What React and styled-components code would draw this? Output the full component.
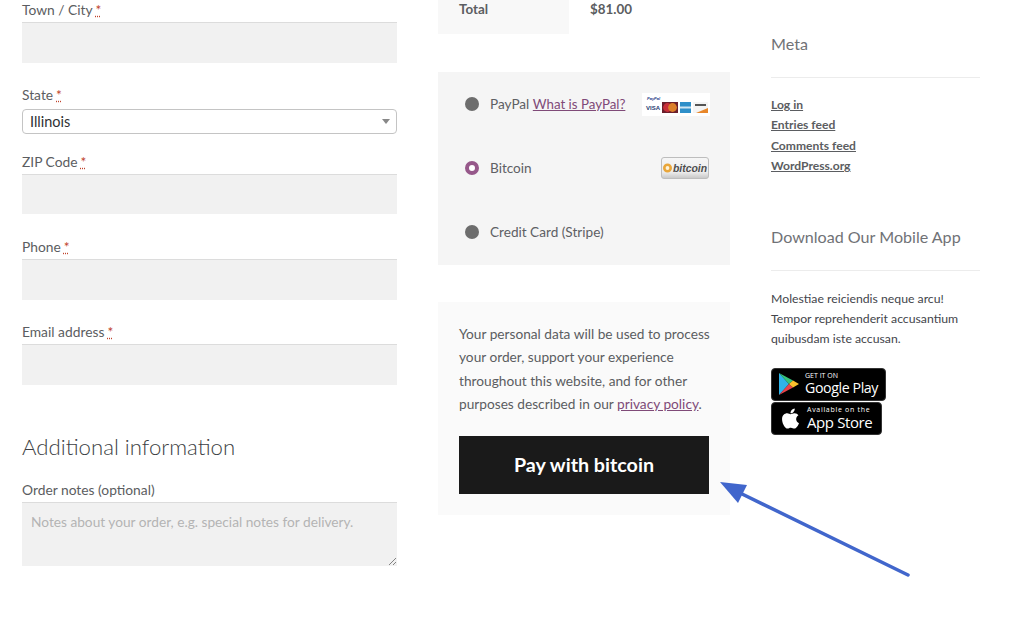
import React from 'react'
import styled, {createGlobalStyle} from 'styled-components'
import {FaApple} from 'react-icons/fa'

const GlobalStyle = createGlobalStyle`
  html, body {
    margin: 0;
    padding: 0;
    background: #fff;
    overflow: hidden;
  }
  body {
    font-family: "Lato", "Open Sans", sans-serif;
    color: #43454b;
  }
`

const Page = styled.div`
  position: relative;
  width: 1016px;
  height: 627px;
  overflow: hidden;
  display: grid;
  grid-template-columns: 375px 292px 209px;
  column-gap: 41px;
  padding-left: 22px;
  box-sizing: border-box;
`

const Column = styled.div`
  display: flex;
  flex-direction: column;
`

const Sidebar = styled(Column)`
  padding-top: 32px;
`

const Field = styled.div`
  display: flex;
  flex-direction: column;
  margin-bottom: ${p => p.$gap}px;
`

const Label = styled.label`
  font-size: 13.8px;
  line-height: 20px;
  color: #5b5d61;
  margin-bottom: 2px;
`

const Required = styled.abbr`
  color: #c0432c;
  margin-left: 3px;
  text-decoration: underline dotted #c0432c;
`

const TextInput = styled.div`
  height: ${p => p.$height}px;
  background: #f1f1f1;
  border-top: 1px solid #dcdcdc;
  box-sizing: border-box;
`

const Select = styled.div`
  height: 25px;
  margin-top: 2px;
  background: #fff;
  border: 1px solid #c4c4c4;
  border-radius: 4px;
  box-sizing: border-box;
  display: flex;
  align-items: center;
  justify-content: space-between;
  padding: 0 6px 0 7px;
  font-size: 14.5px;
  color: #2f3033;
`

const Caret = styled.span`
  width: 0;
  height: 0;
  border-left: 4px solid transparent;
  border-right: 4px solid transparent;
  border-top: 5px solid #888;
`

const SectionTitle = styled.h3`
  margin: 0 0 18px;
  font-size: 22.2px;
  line-height: 30px;
  font-weight: 300;
  color: #3d3f44;
`

const TextArea = styled(TextInput)`
  position: relative;
  padding: 9px 9px;
  font-size: 13.7px;
  line-height: 19px;
  color: #b4b4b4;
`

const ResizeGrip = styled.svg`
  position: absolute;
  right: 0;
  bottom: 0;
`

const TotalRow = styled.div`
  display: flex;
  height: 34px;
  font-size: 13.4px;
  line-height: 18px;
  font-weight: 700;
  color: #5b5d61;
`

const TotalLabel = styled.div`
  width: 131px;
  box-sizing: border-box;
  padding-left: 21px;
  background: #f8f8f8;
`

const TotalValue = styled.div`
  padding-left: 21px;
`

const PaymentBox = styled.div`
  margin-top: 38px;
  height: 193px;
  background: #f5f5f5;
  display: flex;
  flex-direction: column;
  padding: 0 21px 0 27px;
  box-sizing: border-box;
`

const PaymentRow = styled.div`
  height: 64px;
  display: flex;
  align-items: center;
  font-size: 13.6px;
  color: #5e6064;
`

const Radio = styled.span`
  width: 14px;
  height: 14px;
  border-radius: 50%;
  box-sizing: border-box;
  margin-right: 11px;
  flex: none;
  background: ${p => (p.$checked ? '#fff' : '#6d6d6d')};
  border: ${p => (p.$checked ? '4.5px solid #96588a' : 'none')};
`

const PaymentName = styled.span`
  flex: 1;
`

const PurpleLink = styled.a`
  color: #7f4a78;
  text-decoration: underline;
`

const HelpLink = styled(PurpleLink)`
  font-size: 13.3px;
`

const CardIcons = styled.svg`
  margin-right: -1px;
`

const PrivacyBox = styled.div`
  margin-top: 37px;
  height: 213px;
  background: #fafafa;
  box-sizing: border-box;
  padding: 20px 21px;
`

const PrivacyText = styled.p`
  margin: 0 0 20px;
  font-size: 13.7px;
  line-height: 23.4px;
  color: #5b5d61;
  white-space: nowrap;
`

const PayButton = styled.button`
  display: block;
  width: 100%;
  height: 58px;
  background: #1a1a1a;
  color: #fff;
  border: 0;
  font-family: inherit;
  font-size: 19.7px;
  font-weight: 700;
`

const WidgetTitle = styled.h4`
  margin: 0 0 17px;
  padding-bottom: 21px;
  border-bottom: 1px solid #ececec;
  font-size: 16.1px;
  line-height: 24px;
  font-weight: 400;
  color: #707276;
`

const WidgetList = styled.div`
  display: flex;
  flex-direction: column;
  margin-bottom: 48px;
`

const WidgetLink = styled.a`
  font-size: 12.1px;
  line-height: 20.4px;
  font-weight: 700;
  color: #5b5d61;
  text-decoration: underline;
`

const WidgetText = styled.p`
  margin: 1px 0 19px;
  font-size: 12.25px;
  line-height: 20px;
  color: #43454b;
`

const Badge = styled.div`
  width: ${p => p.$width}px;
  height: 33px;
  background: #000;
  border: 1px solid #333;
  border-radius: 4px;
  box-sizing: border-box;
  margin-bottom: 1px;
  display: flex;
  align-items: center;
  color: #fff;
  padding-left: ${p => p.$pad}px;
`

const BadgeCopy = styled.div`
  display: flex;
  flex-direction: column;
  margin-left: ${p => p.$gap}px;
  font-family: "Open Sans", sans-serif;
`

const BadgeSmall = styled.span`
  font-size: 7px;
  line-height: 8px;
  letter-spacing: ${p => p.$spacing || 0}px;
`

const BadgeBig = styled.span`
  font-size: ${p => p.$size}px;
  line-height: 16px;
  letter-spacing: -0.4px;
`

const ArrowOverlay = styled.svg`
  position: absolute;
  left: 0;
  top: 0;
  pointer-events: none;
`

const CardStrip = () => (
  <CardIcons width="68" height="23" viewBox="0 0 68 23">
    <rect width="68" height="23" fill="#fff" />
    <text x="5" y="6.5" fontSize="4" fontWeight="700" fontStyle="italic" fill="#1f3c88" fontFamily="Liberation Sans, sans-serif">PayPal</text>
    <text x="4" y="16.5" fontSize="6" fontWeight="700" fill="#1f3a70" fontFamily="Liberation Sans, sans-serif">VISA</text>
    <rect x="20" y="9" width="16" height="11" fill="#6b1f2c" />
    <circle cx="25.5" cy="14.5" r="4.4" fill="#c8303a" />
    <circle cx="30.5" cy="14.5" r="4.4" fill="#dc7f2a" />
    <rect x="38" y="9" width="11" height="11" fill="#2e8fc9" />
    <rect x="38" y="13.5" width="11" height="2" fill="#cfe6f3" />
    <rect x="51" y="9" width="15" height="11" fill="#f4f4f4" />
    <rect x="53" y="11" width="11" height="2" fill="#555" />
    <path d="M54 20 L66 15 L66 20 Z" fill="#e8872a" />
  </CardIcons>
)

const BitcoinBadge = () => (
  <svg width="48" height="22" viewBox="0 0 48 22">
    <defs>
      <linearGradient id="btn" x1="0" y1="0" x2="0" y2="1">
        <stop offset="0" stopColor="#f6f6f6" />
        <stop offset="0.7" stopColor="#ececec" />
        <stop offset="1" stopColor="#c6c6c6" />
      </linearGradient>
    </defs>
    <rect x="0.5" y="0.5" width="47" height="21" rx="2.5" fill="url(#btn)" stroke="#bdbdbd" />
    <circle cx="6.5" cy="11" r="3.2" fill="#fff3d8" stroke="#e9a63a" strokeWidth="2.6" />
    <text x="12" y="14.5" fontSize="10.4" fontWeight="700" fontStyle="italic" fill="#4d4d4d" fontFamily="Liberation Sans, sans-serif">bitcoin</text>
  </svg>
)

const PlayLogo = () => (
  <svg width="21" height="24" viewBox="0 0 21 24">
    <path d="M1 1 L11 12 L1 23 Z" fill="#2fb4e9" />
    <path d="M1 1 L15 8.5 L11 12 Z" fill="#35c37a" />
    <path d="M1 23 L15 15.5 L11 12 Z" fill="#e8434b" />
    <path d="M15 8.5 L21 12 L15 15.5 L11 12 Z" fill="#fbc02d" />
  </svg>
)

const fields = [
  {label: 'ZIP Code', height: 40, gap: 23},
  {label: 'Phone', height: 41, gap: 22},
  {label: 'Email address', height: 41, gap: 47},
]

const links = ['Log in', 'Entries feed', 'Comments feed', 'WordPress.org']

export default function App() {
  return (
    <Page>
      <GlobalStyle />
      <Column>
        <Field $gap={22}>
          <Label>Town / City<Required>*</Required></Label>
          <TextInput $height={41} />
        </Field>
        <Field $gap={18}>
          <Label>State<Required>*</Required></Label>
          <Select>Illinois<Caret /></Select>
        </Field>
        {fields.map(f => (
          <Field key={f.label} $gap={f.gap}>
            <Label>{f.label}<Required>*</Required></Label>
            <TextInput $height={f.height} />
          </Field>
        ))}
        <SectionTitle>Additional information</SectionTitle>
        <Field $gap={0}>
          <Label>Order notes (optional)</Label>
          <TextArea $height={64}>
            Notes about your order, e.g. special notes for delivery.
            <ResizeGrip width="9" height="9" viewBox="0 0 9 9">
              <path d="M1 8 L8 1 M5 8 L8 5" stroke="#666" strokeWidth="0.8" />
            </ResizeGrip>
          </TextArea>
        </Field>
      </Column>

      <Column>
        <TotalRow>
          <TotalLabel>Total</TotalLabel>
          <TotalValue>$81.00</TotalValue>
        </TotalRow>
        <PaymentBox>
          <PaymentRow>
            <Radio />
            <PaymentName>PayPal <HelpLink href="#">What is PayPal?</HelpLink></PaymentName>
            <CardStrip />
          </PaymentRow>
          <PaymentRow>
            <Radio $checked />
            <PaymentName>Bitcoin</PaymentName>
            <BitcoinBadge />
          </PaymentRow>
          <PaymentRow>
            <Radio />
            <PaymentName>Credit Card (Stripe)</PaymentName>
          </PaymentRow>
        </PaymentBox>
        <PrivacyBox>
          <PrivacyText>
            Your personal data will be used to process<br />
            your order, support your experience<br />
            throughout this website, and for other<br />
            purposes described in our <PurpleLink href="#">privacy policy</PurpleLink>.
          </PrivacyText>
          <PayButton>Pay with bitcoin</PayButton>
        </PrivacyBox>
      </Column>

      <Sidebar>
        <WidgetTitle>Meta</WidgetTitle>
        <WidgetList>
          {links.map(l => <WidgetLink key={l} href="#">{l}</WidgetLink>)}
        </WidgetList>
        <WidgetTitle>Download Our Mobile App</WidgetTitle>
        <WidgetText>
          Molestiae reiciendis neque arcu!<br />
          Tempor reprehenderit accusantium<br />
          quibusdam iste accusan.
        </WidgetText>
        <Badge $width={115} $pad={6}>
          <PlayLogo />
          <BadgeCopy $gap={6}>
            <BadgeSmall>GET IT ON</BadgeSmall>
            <BadgeBig $size={14.2}>Google Play</BadgeBig>
          </BadgeCopy>
        </Badge>
        <Badge $width={111} $pad={7}>
          <FaApple size={23} />
          <BadgeCopy $gap={5}>
            <BadgeSmall $spacing={0.7}>Available on the</BadgeSmall>
            <BadgeBig $size={15}>App Store</BadgeBig>
          </BadgeCopy>
        </Badge>
      </Sidebar>

      <ArrowOverlay width="1016" height="627" viewBox="0 0 1016 627">
        <line x1="908" y1="575" x2="738" y2="492" stroke="#4166cc" strokeWidth="3.5" strokeLinecap="round" />
        <path d="M720 482 L747 485 L738 503 Z" fill="#4166cc" />
      </ArrowOverlay>
    </Page>
  )
}
